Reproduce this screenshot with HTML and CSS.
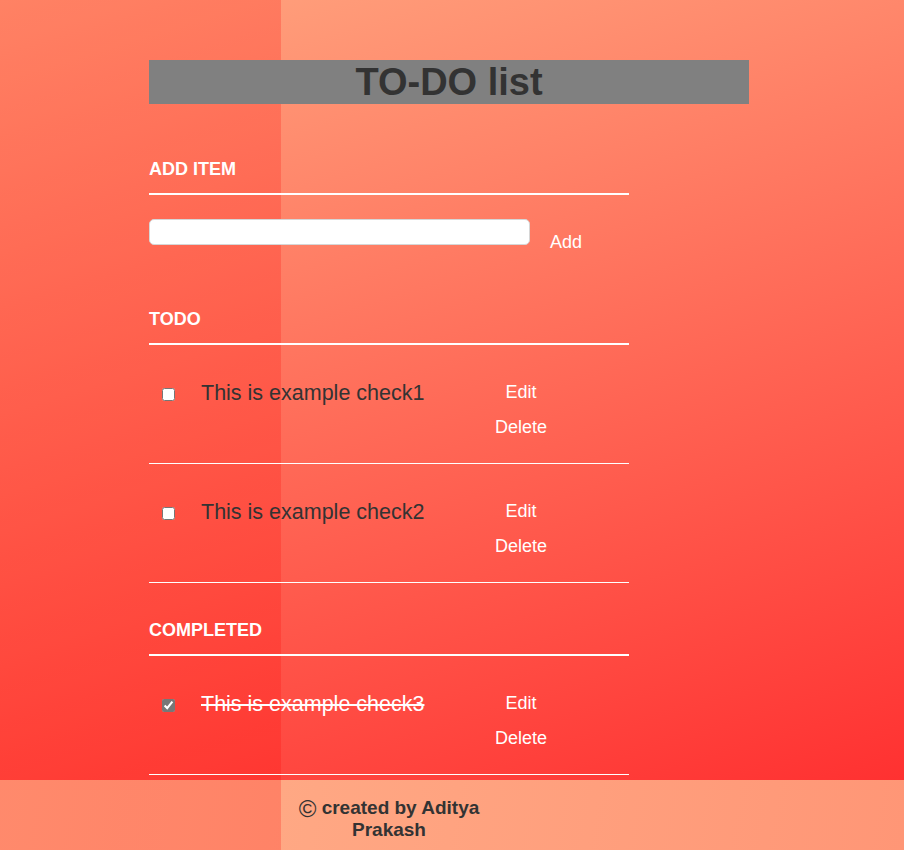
FILE: index.html
```html
<!DOCTYPE html>
<html lang="en">
<head>
<meta charset="utf-8">
<title>TO-DO list</title>
<link rel="stylesheet" href="styles.css">
</head>
<body>
<div class="page">
  <div class="container">
    <h1 class="title">TO-DO list</h1>

    <section class="section add">
      <h3 class="heading">ADD ITEM</h3>
      <div class="add-row">
        <input type="text" class="new-task">
        <button class="btn add-btn">Add</button>
      </div>
    </section>

    <section class="section todo">
      <h3 class="heading">TODO</h3>
      <ul class="list">
        <li class="item">
          <input type="checkbox" class="check">
          <label class="label">This is example check1</label>
          <div class="actions">
            <button class="btn">Edit</button>
            <button class="btn">Delete</button>
          </div>
        </li>
        <li class="item">
          <input type="checkbox" class="check">
          <label class="label">This is example check2</label>
          <div class="actions">
            <button class="btn">Edit</button>
            <button class="btn">Delete</button>
          </div>
        </li>
      </ul>
    </section>

    <section class="section completed">
      <h3 class="heading">COMPLETED</h3>
      <ul class="list">
        <li class="item done">
          <input type="checkbox" class="check" checked>
          <label class="label">This is example check3</label>
          <div class="actions">
            <button class="btn">Edit</button>
            <button class="btn">Delete</button>
          </div>
        </li>
      </ul>
    </section>
  </div>
</div>
<footer class="footer">
  <div class="footer-inner">
    <p class="credit"><span class="copy">&copy;</span> created by Aditya Prakash</p>
  </div>
</footer>
</body>
</html>
```

FILE: styles.css
```css
html, body {
  margin: 0;
  padding: 0;
}

body {
  font-family: "Liberation Sans", Arial, sans-serif;
}

.page {
  background:
    linear-gradient(to right, rgba(255, 0, 0, 0.22) 281px, transparent 281px),
    linear-gradient(163deg, #ffa680 0%, #ff3131 100%);
  padding: 60px 0 5px;
}

.container {
  width: 600px;
  margin-left: 149px;
}

.title {
  margin: 0;
  height: 44px;
  line-height: 44px;
  background: #808080;
  color: #333;
  font-size: 38px;
  font-weight: bold;
  text-align: center;
}

.section {
  width: 480px;
}

.add {
  margin-top: 55px;
}

.todo {
  margin-top: 56px;
}

.completed {
  margin-top: 37px;
}

.heading {
  margin: 0;
  font-size: 18px;
  line-height: 21px;
  font-weight: bold;
  color: #fff;
  padding-bottom: 13px;
  border-bottom: 2px solid #fff;
}

.add-row {
  display: flex;
  align-items: flex-start;
  margin-top: 24px;
}

.new-task {
  box-sizing: border-box;
  width: 381px;
  height: 26px;
  margin: 0;
  padding: 0 8px;
  border: 1px solid #d6d6d6;
  border-radius: 5px;
  background: #fff;
}

.btn {
  background: none;
  border: 0;
  padding: 0;
  margin: 0;
  color: #fff;
  font-family: "Liberation Sans", Arial, sans-serif;
  font-size: 18px;
  line-height: 35px;
  cursor: pointer;
}

.add-btn {
  margin-left: 20px;
  margin-top: 13px;
  line-height: 21px;
}

.list {
  list-style: none;
  margin: 0;
  padding: 0;
}

.item {
  display: flex;
  align-items: flex-start;
  padding: 30px 0 18px;
  border-bottom: 1px solid #fff;
}

.check {
  width: 13px;
  height: 13px;
  margin: 13px 0 0 13px;
  accent-color: #777;
}

.label {
  flex: 0 0 270px;
  margin: 1px 0 0 26px;
  font-size: 21.5px;
  line-height: 35px;
  color: #333;
}

.done .label {
  color: #fff;
  text-decoration: line-through;
}

.actions {
  display: flex;
  flex-direction: column;
  align-items: center;
  width: 100px;
}

.actions .btn {
  height: 35px;
}

.footer {
  box-sizing: border-box;
  height: 70px;
  padding-top: 17px;
  background:
    linear-gradient(to right, rgba(255, 0, 0, 0.22) 281px, transparent 281px),
    linear-gradient(100deg, #ffb08a 0%, #ff9676 100%);
}

.footer-inner {
  width: 480px;
  margin-left: 149px;
}

.credit {
  width: 200px;
  margin: 0 auto;
  text-align: center;
  font-size: 19px;
  line-height: 22px;
  font-weight: bold;
  color: #333;
}

.copy {
  font-size: 24px;
  font-weight: normal;
  line-height: 0;
  vertical-align: -3px;
}
```
